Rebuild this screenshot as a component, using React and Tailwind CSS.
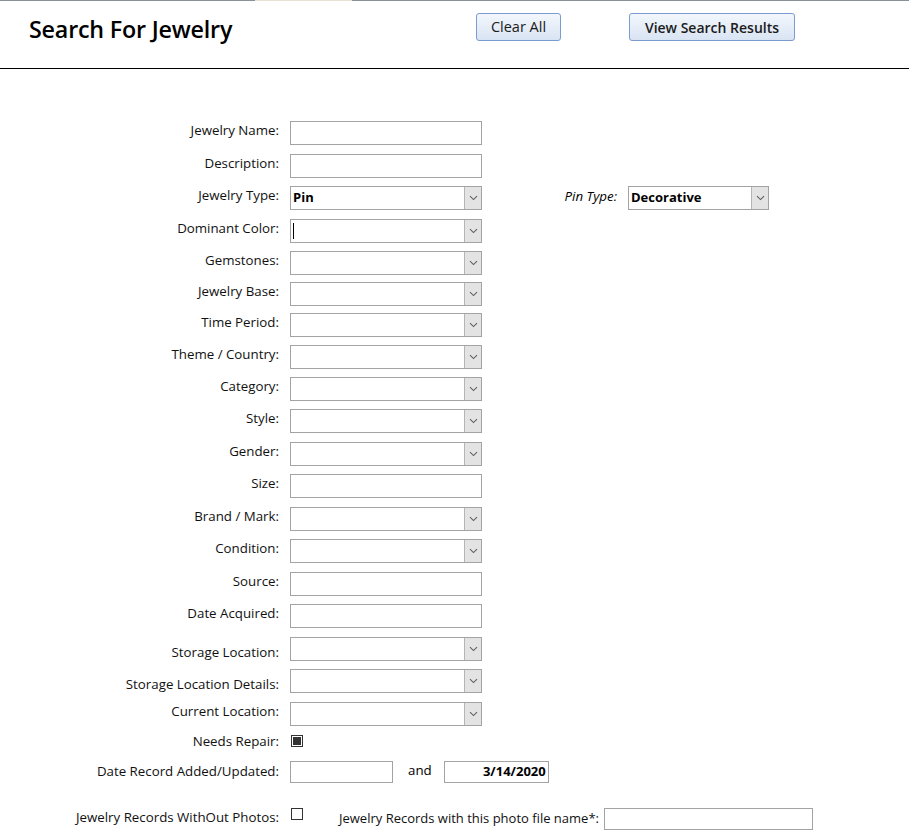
import React from "react";

const font = { fontFamily: '"Open Sans", "Noto Sans", sans-serif' };

function Chevron() {
  return (
    <svg width="9" height="6" viewBox="0 0 9 6" className="block">
      <path d="M1 1.2 L4.5 4.6 L8 1.2" fill="none" stroke="#606060" strokeWidth="1.1" />
    </svg>
  );
}

function TextBox({ w = "w-[192px]", h = "h-[24px]", children, right }) {
  return (
    <div
      className={`${w} ${h} border border-[#a3a3a3] bg-white flex items-center px-[2px] text-[13px] ${right ? "justify-end font-bold" : ""}`}
    >
      {children}
    </div>
  );
}

function Select({ w = "w-[192px]", value, cursor }) {
  return (
    <div className={`${w} h-[24px] border border-[#a3a3a3] bg-white flex items-stretch`}>
      <div className="flex-1 flex items-center pl-[2px] text-[13px] font-bold text-black">
        {cursor ? <span className="inline-block w-[1px] h-[16px] bg-black" /> : value}
      </div>
      <div className="w-[17px] bg-[#e3e3e3] border-l border-[#b5b5b5] flex items-center justify-center">
        <Chevron />
      </div>
    </div>
  );
}

function Row({ label, mt, children, extra }) {
  return (
    <div className={`flex items-start ${mt}`}>
      <div className="w-[279px] text-right text-[13.3px] leading-[18px] text-[#111]">{label}</div>
      <div className="ml-[11px] flex items-start">{children}</div>
      {extra}
    </div>
  );
}

const rows = [
  { label: "Jewelry Name:", kind: "text", mt: "mt-[52px]" },
  { label: "Description:", kind: "text", mt: "mt-[9px]" },
  { label: "Jewelry Type:", kind: "select", value: "Pin", mt: "mt-[8px]", pin: true },
  { label: "Dominant Color:", kind: "select", cursor: true, mt: "mt-[9px]" },
  { label: "Gemstones:", kind: "select", mt: "mt-[8px]" },
  { label: "Jewelry Base:", kind: "select", mt: "mt-[7px]" },
  { label: "Time Period:", kind: "select", mt: "mt-[7px]" },
  { label: "Theme / Country:", kind: "select", mt: "mt-[8px]" },
  { label: "Category:", kind: "select", mt: "mt-[8px]" },
  { label: "Style:", kind: "select", mt: "mt-[8px]" },
  { label: "Gender:", kind: "select", mt: "mt-[9px]" },
  { label: "Size:", kind: "text", mt: "mt-[8px]" },
  { label: "Brand / Mark:", kind: "select", mt: "mt-[9px]" },
  { label: "Condition:", kind: "select", mt: "mt-[8px]" },
  { label: "Source:", kind: "text", mt: "mt-[9px]" },
  { label: "Date Acquired:", kind: "text", mt: "mt-[8px]" },
  { label: "Storage Location:", kind: "select", mt: "mt-[9px]", labelPad: true },
  { label: "Storage Location Details:", kind: "select", mt: "mt-[8px]", labelPad: true },
  { label: "Current Location:", kind: "select", mt: "mt-[9px]" },
];

function Checkbox({ checked }) {
  return (
    <div className="w-[12px] h-[12px] border border-[#333] bg-white flex items-center justify-center">
      {checked && <div className="w-[8px] h-[8px] bg-[#333]" />}
    </div>
  );
}

export default function App() {
  return (
    <div className="w-[909px] h-[837px] bg-white text-black overflow-hidden" style={font}>
      {/* top strip */}
      <div className="flex h-[1px]">
        <div className="w-[255px] bg-[#8a9097]" />
        <div className="w-[97px] bg-[#e9e2d4]" />
        <div className="flex-1 bg-[#8a9097]" />
      </div>
      {/* header */}
      <div className="h-[68px] border-b border-black flex items-start">
        <div className="w-[476px] pl-[29px] pt-[13px] text-[23.3px] font-semibold leading-[30px] tracking-[-0.2px]">
          Search For Jewelry
        </div>
        <button className="mt-[12px] w-[85px] h-[28px] rounded-[3px] border border-[#7a9cd0] bg-gradient-to-b from-[#f3f7fc] to-[#d9e4f3] text-[14.5px] text-[#1b1b1b]">
          Clear All
        </button>
        <button className="ml-[68px] mt-[12px] w-[166px] h-[28px] rounded-[3px] border border-[#7a9cd0] bg-gradient-to-b from-[#f3f7fc] to-[#d9e4f3] text-[14px] font-semibold text-[#1b1b1b]">
          View Search Results
        </button>
      </div>

      {/* form */}
      <div className="flex flex-col">
        {rows.map((r) => (
          <Row
            key={r.label}
            label={<span className={r.labelPad ? "inline-block pt-[6px]" : ""}>{r.label}</span>}
            mt={r.mt}
            extra={
              r.pin ? (
                <div className="flex items-start ml-[73px]">
                  <div className="w-[62px] text-right text-[13.3px] leading-[18px] italic pt-[1px] whitespace-nowrap">Pin Type:</div>
                  <div className="ml-[11px]">
                    <Select w="w-[141px]" value="Decorative" />
                  </div>
                </div>
              ) : null
            }
          >
            {r.kind === "text" ? <TextBox /> : <Select value={r.value} cursor={r.cursor} />}
          </Row>
        ))}

        {/* Needs repair */}
        <div className="flex items-center mt-[6px]">
          <div className="w-[279px] text-right text-[13.3px] leading-[18px] text-[#111]">Needs Repair:</div>
          <div className="ml-[12px]">
            <Checkbox checked />
          </div>
        </div>

        {/* Date record */}
        <div className="flex items-start mt-[11px]">
          <div className="w-[279px] text-right text-[13.3px] leading-[18px] pt-[1px] text-[#111]">Date Record Added/Updated:</div>
          <div className="ml-[11px]">
            <TextBox w="w-[103px]" h="h-[22px]" />
          </div>
          <div className="ml-[15px] text-[13.3px] leading-[18px]">and</div>
          <div className="ml-[12px]">
            <TextBox w="w-[105px]" h="h-[22px]" right>
              3/14/2020
            </TextBox>
          </div>
        </div>

        {/* photos */}
        <div className="flex items-start mt-[25px]">
          <div className="w-[279px] text-right text-[13.3px] leading-[18px] text-[#111]">Jewelry Records WithOut Photos:</div>
          <div className="ml-[12px]">
            <Checkbox />
          </div>
          <div className="ml-[36px] w-[262px] pt-[1px] text-[13px] leading-[18px] whitespace-nowrap text-[#111]">
            Jewelry Records with this photo file name*:
          </div>
          <div className="ml-[3px]">
            <TextBox w="w-[209px]" h="h-[22px]" />
          </div>
        </div>
      </div>
    </div>
  );
}
